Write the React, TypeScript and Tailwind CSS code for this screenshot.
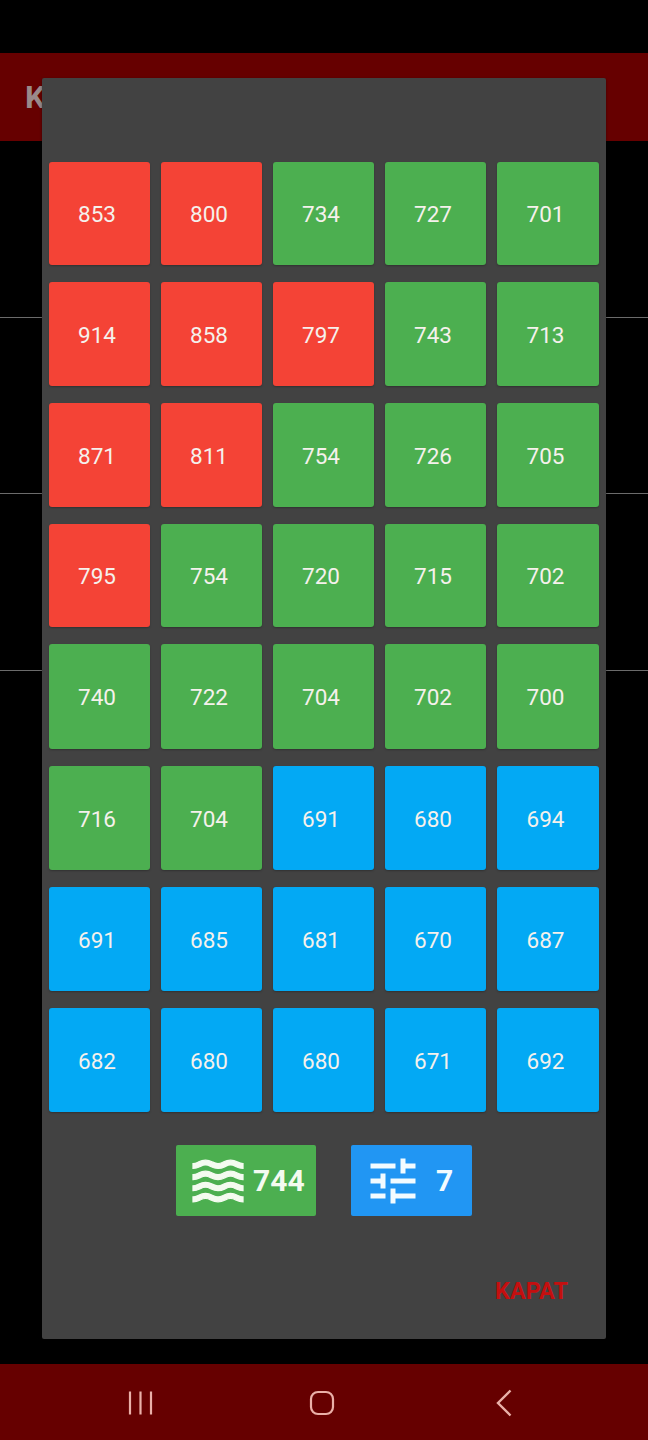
import { MdWaves, MdTune } from "react-icons/md";

type Tone = "r" | "g" | "b";
const cells: [number, Tone][] = [
  [853, "r"], [800, "r"], [734, "g"], [727, "g"], [701, "g"],
  [914, "r"], [858, "r"], [797, "r"], [743, "g"], [713, "g"],
  [871, "r"], [811, "r"], [754, "g"], [726, "g"], [705, "g"],
  [795, "r"], [754, "g"], [720, "g"], [715, "g"], [702, "g"],
  [740, "g"], [722, "g"], [704, "g"], [702, "g"], [700, "g"],
  [716, "g"], [704, "g"], [691, "b"], [680, "b"], [694, "b"],
  [691, "b"], [685, "b"], [681, "b"], [670, "b"], [687, "b"],
  [682, "b"], [680, "b"], [680, "b"], [671, "b"], [692, "b"],
];

const toneClass: Record<Tone, string> = {
  r: "bg-[#f44336]",
  g: "bg-[#4caf50]",
  b: "bg-[#03a9f4]",
};

export default function App() {
  return (
    <div className="relative flex h-[1440px] w-[648px] flex-col overflow-hidden bg-black font-['Roboto',sans-serif]">
      <div className="h-[53px] shrink-0" />
      <div className="flex h-[88px] shrink-0 items-center bg-[#660000] pl-[25px]">
        <span className="text-[32px] font-bold leading-none text-[#9a8a8a]">K</span>
      </div>
      <div className="h-[177px] shrink-0 border-b border-[#6b6b6b]" />
      <div className="h-[176px] shrink-0 border-b border-[#6b6b6b]" />
      <div className="h-[177px] shrink-0 border-b border-[#6b6b6b]" />
      <div className="flex-1" />
      <div className="flex h-[76px] shrink-0 items-center bg-[#660000] pb-[1px]">
        <svg className="absolute left-[128px] top-[1390px]" width="26" height="26" viewBox="0 0 26 26" fill="none" stroke="#eab0a8" strokeWidth="2.2">
          <path d="M2 1.5V24.5M12.5 1.5V24.5M23 1.5V24.5" />
        </svg>
        <svg className="absolute left-[308px] top-[1389px]" width="28" height="28" viewBox="0 0 28 28" fill="none" stroke="#eab0a8" strokeWidth="2.2">
          <rect x="3" y="3" width="22" height="22" rx="7" />
        </svg>
        <svg className="absolute left-[494px] top-[1388px]" width="20" height="30" viewBox="0 0 20 30" fill="none" stroke="#eab0a8" strokeWidth="2.4">
          <path d="M16.5 2.5L4 15L16.5 27.5" />
        </svg>
      </div>

      <div className="absolute left-[42px] top-[78px] flex h-[1261px] w-[564px] flex-col rounded-[2px] bg-[#424242] pt-[84px] shadow-[0_1px_3px_rgba(0,0,0,0.4)]">
        <div className="grid grid-cols-[101px_101px_101px_101px_102px] grid-rows-[103px_104px_104px_103px_105px_104px_104px_104px] gap-x-[11px] gap-y-[17px] px-[7px]">
          {cells.map(([value, tone], i) => (
            <div
              key={i}
              className={`flex items-center justify-center rounded-[3px] pr-[5px] pt-[2px] text-[22.5px] leading-none text-[#f5f1ec] shadow-[0_1px_2px_rgba(0,0,0,0.25)] ${toneClass[tone]}`}
            >
              {value}
            </div>
          ))}
        </div>
        <div className="mt-[33px] flex justify-center gap-[35px]">
          <div className="flex h-[71px] w-[140px] items-center rounded-[2px] bg-[#4caf50] pl-[12px] text-[#f4fbf0]">
            <MdWaves size={60} className="shrink-0" stroke="currentColor" strokeWidth={0.5} />
            <span className="ml-[5px] pt-[1px] text-[30px] font-bold leading-none">744</span>
          </div>
          <div className="flex h-[71px] w-[121px] items-center rounded-[2px] bg-[#2196f3] pl-[12px] text-[#f2fbff]">
            <MdTune size={60} className="shrink-0" />
            <span className="ml-[13px] pt-[1px] text-[30px] font-bold leading-none">7</span>
          </div>
        </div>
        <div className="mt-[60px] flex justify-end pr-[38px]">
          <span className="text-[23.5px] font-bold leading-[30px] text-[#c40f0f]">KAPAT</span>
        </div>
      </div>
    </div>
  );
}
